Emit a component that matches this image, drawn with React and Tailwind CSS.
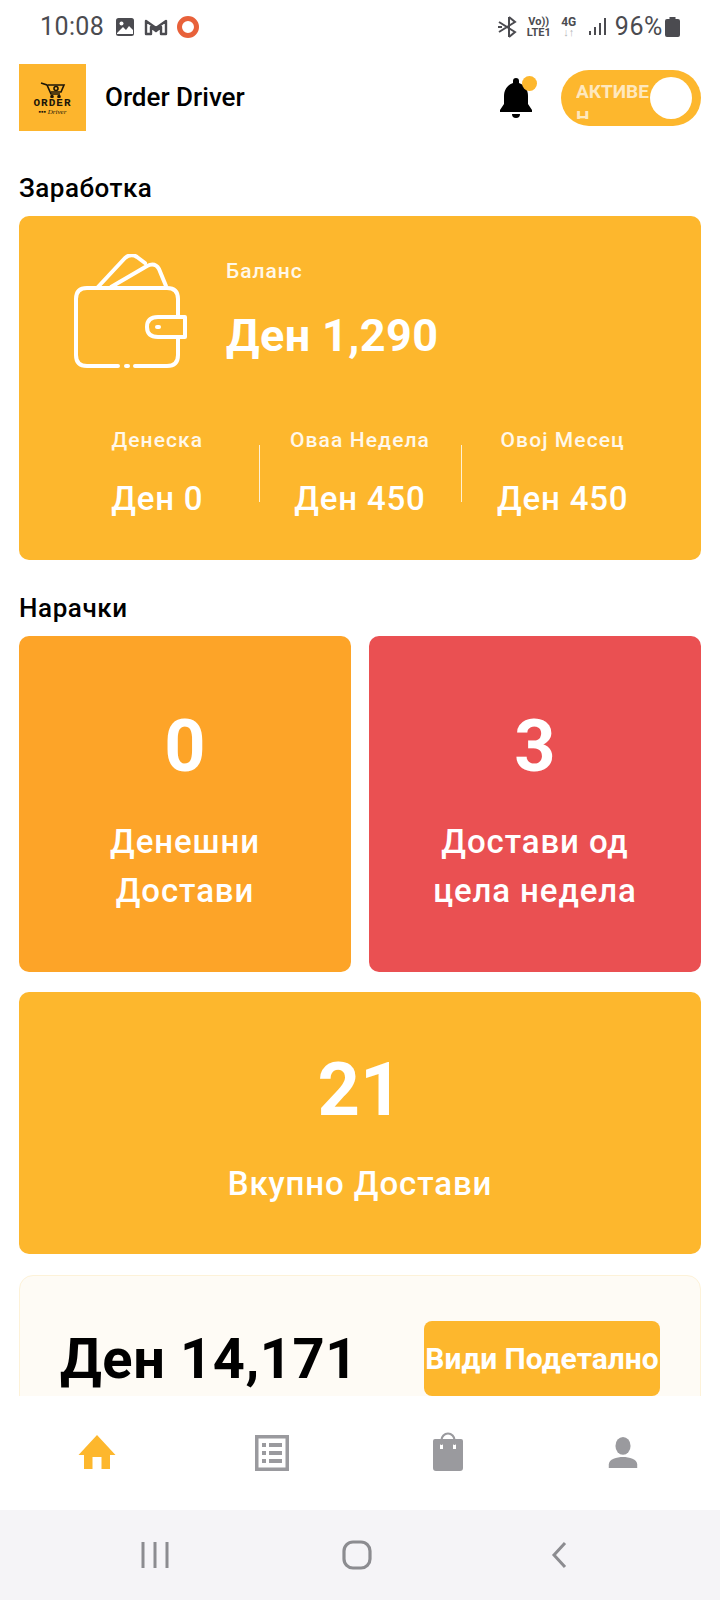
import React from "react";

const font = { fontFamily: "Roboto, 'Liberation Sans', sans-serif" };

function Home() {
  return (
    <svg width="40" height="36" viewBox="0 0 40 36" fill="#fdb72d">
      <path d="M20 1 L38.500 21 H33 V35 H24.500 V23 H15.500 V35 H7 V21 H1.500 Z" />
    </svg>
  );
}
function ListIcon() {
  return (
    <svg width="36" height="36" viewBox="0 0 36 36" fill="#9a9a9e">
      <path fillRule="evenodd" d="M1 0 H35 V36 H1 Z M4.500 3.500 V32.500 H31.500 V3.500 Z" />
      <rect x="8" y="8" width="4" height="4" />
      <rect x="15" y="8" width="13" height="4" />
      <rect x="8" y="16" width="4" height="4" />
      <rect x="15" y="16" width="13" height="4" />
      <rect x="8" y="24" width="4" height="4" />
      <rect x="15" y="24" width="13" height="4" />
    </svg>
  );
}
function Bag() {
  return (
    <svg width="32" height="40" viewBox="0 0 32 40" fill="none">
      <path d="M9.500 13 V8 a6.500 6.500 0 0 1 13 0 V13" stroke="#9a9a9e" strokeWidth="2.200" />
      <path fillRule="evenodd" fill="#9a9a9e" d="M3 7 H29 a2 2 0 0 1 2 2 V36 a3 3 0 0 1 -3 3 H4 a3 3 0 0 1 -3 -3 V9 a2 2 0 0 1 2 -2 Z M8 12 V17 H11 V12 Z M21 12 V17 H24 V12 Z" />
    </svg>
  );
}
function User() {
  return (
    <svg width="32" height="32" viewBox="0 0 34 36" fill="#9a9a9e">
      <ellipse cx="17" cy="10" rx="8.500" ry="10" />
      <path d="M1 35 V31 C1 25 10 22.500 17 22.500 C24 22.500 33 25 33 31 V35 Z" />
    </svg>
  );
}
function Wallet() {
  return (
    <svg width="114" height="116" viewBox="0 0 114 116" fill="none" stroke="#fff" strokeWidth="4" strokeLinecap="round" strokeLinejoin="round">
      <path d="M24 34 L52 4 Q58 -1 64 3 L72 9" />
      <path d="M38 33 L74 12 Q82 8 86 15 L93 32" />
      <path d="M45 112 H14 Q3 112 3 101 V45 Q3 34 14 34 H94 Q105 34 105 45 V63" />
      <path d="M105 83 V101 Q105 112 94 112 H62" />
      <path d="M53 112 H55" />
      <path d="M112 63 H85 Q74 63 74 73 Q74 83 85 83 H112 Z" />
      <path d="M84 73 H86" />
    </svg>
  );
}
function Logo() {
  return (
    <div className="w-[67px] h-[67px] bg-[#fdb52d] flex flex-col items-center justify-center shrink-0 pt-[2px]">
      <svg width="26" height="16" viewBox="0 0 26 16" fill="none" stroke="#1c1608" strokeWidth="1.600">
        <path d="M1 1 L7 3 L11 12 H20" />
        <path d="M8 3 H24 L21 10 H11" />
        <circle cx="16" cy="6.500" r="2" />
        <circle cx="12" cy="14.500" r="1" fill="#1c1608" />
        <circle cx="19" cy="14.500" r="1" fill="#1c1608" />
      </svg>
      <span className="text-[11px] leading-[11px] font-bold tracking-[1px] text-[#1c1608]" style={{ fontFamily: "'Liberation Mono', monospace" }}>ORDER</span>
      <span className="text-[7px] leading-[7px] italic text-[#1c1608]" style={{ fontFamily: "'Liberation Serif', serif" }}>▪▪▪ Driver</span>
    </div>
  );
}

export default function App() {
  return (
    <div className="relative w-[720px] h-[1600px] bg-white flex flex-col overflow-hidden" style={font}>
      <div className="h-[52px] shrink-0 flex items-center justify-between pl-[40px] pr-[40px] pt-[1px] text-[#4b4b50]">
        <div className="flex items-center gap-[9px]">
          <span className="text-[25px] leading-[28px] tracking-[0.4px]">10:08</span>
          <svg width="20" height="20" viewBox="0 0 20 20" className="ml-[2px]">
            <rect x="1" y="1" width="18" height="18" rx="2.500" fill="#4b4b50" />
            <circle cx="6.500" cy="6.500" r="2" fill="#fff" />
            <path d="M2 16 L8 10 L11 13 L14 9 L18 13 V17 H2 Z" fill="#fff" />
          </svg>
          <svg width="24" height="18" viewBox="0 0 24 18" fill="none" stroke="#4b4b50" strokeWidth="2.400" strokeLinejoin="round">
            <path d="M2 16 V3 L12 10 L22 3 V16 H17 V9 L12 13 L7 9 V16 Z" />
          </svg>
          <svg width="24" height="24" viewBox="0 0 24 24" fill="none" className="-ml-[1px]">
            <circle cx="12" cy="12" r="8.500" stroke="#e8613a" strokeWidth="5" />
          </svg>
        </div>
        <div className="flex items-center">
          <svg width="22" height="24" viewBox="0 0 22 24" fill="none" stroke="#4b4b50" strokeWidth="2">
            <path d="M12 2 L18 7 L2 17 M12 22 L18 17 L2 7 M12 2 V22" />
            <path d="M1 12 H5" />
          </svg>
          <div className="ml-[7px] flex flex-col items-center text-[11px] leading-[11px] font-bold w-[26px]">
            <span>Vo))</span>
            <span className="whitespace-nowrap">LTE1</span>
          </div>
          <div className="ml-[8px] flex flex-col items-center w-[18px]">
            <span className="text-[12px] leading-[12px] font-bold">4G</span>
            <span className="text-[11px] leading-[10px] font-bold text-[#b5b5b8] whitespace-nowrap">↓↑</span>
          </div>
          <svg width="20" height="20" viewBox="0 0 20 20" fill="#4b4b50" className="ml-[10px]">
            <rect x="1" y="14" width="2" height="4" />
            <rect x="6" y="10" width="2" height="8" />
            <rect x="11" y="6" width="2" height="12" />
            <rect x="16" y="1" width="2" height="17" />
          </svg>
          <span className="ml-[7px] text-[25px] leading-[28px] tracking-[0.6px]">96%</span>
          <svg width="15" height="20" viewBox="0 0 15 20" fill="#4b4b50" className="ml-[2px]">
            <path d="M4.500 0 H10.500 V2 H13 a2 2 0 0 1 2 2 V18 a2 2 0 0 1 -2 2 H2 a2 2 0 0 1 -2 -2 V4 a2 2 0 0 1 2 -2 H4.500 Z" />
          </svg>
        </div>
      </div>

      <main className="flex-1 min-h-0 overflow-hidden px-[19px]">
        <header className="flex items-center h-[67px] mt-[12px]">
          <Logo />
          <span className="ml-[19px] text-[26px] font-medium text-black">Order Driver</span>
          <div className="relative ml-auto mr-[27px] w-[36px] h-[44px]">
            <svg width="34" height="40" viewBox="0 0 34 40" className="absolute left-[1px] top-[2px]" fill="#000">
              <path d="M17 0 a3 3 0 0 1 3 3 V5 C26 7 29 12 29 18 V26 L33 32 V34 H1 V32 L5 26 V18 C5 12 8 7 14 5 V3 a3 3 0 0 1 3 -3 Z" />
              <path d="M13 36 H21 a4 4 0 0 1 -8 0 Z" />
            </svg>
            <span className="absolute left-[24px] top-0 w-[15px] h-[15px] rounded-full bg-[#fdb72d]" />
          </div>
          <div className="relative w-[140px] h-[56px] rounded-full bg-[#fdb72d] overflow-hidden">
            <div className="w-[85px] h-[49px] ml-[15px] pt-[9px] text-[19px] leading-[26px] font-bold text-white/70 break-all overflow-hidden">АКТИВЕН</div>
            <span className="absolute left-[89px] top-[7px] w-[42px] h-[42px] rounded-full bg-white" />
          </div>
        </header>

        <h2 className="mt-[41px] text-[26px] leading-[32px] font-medium text-black tracking-[0.5px]">Заработка</h2>
        <section className="mt-[12px] h-[344px] rounded-[10px] bg-[#fdb72d] px-[37px] flex flex-col">
          <div className="flex mt-[38px] ml-[17px]">
            <Wallet />
            <div className="ml-[39px] flex flex-col">
              <span className="mt-[5px] text-[21px] leading-[24px] font-medium text-white/90 tracking-[1px]">Баланс</span>
              <span className="mt-[27px] text-[45px] leading-[52px] font-bold text-white tracking-[0.4px]">Ден 1,290</span>
            </div>
          </div>
          <div className="flex mt-[58px]">
            {[["Денеска", "Ден 0"], ["Оваа Недела", "Ден 450"], ["Овој Месец", "Ден 450"]].map(([a, b], i) => (
              <div key={a} className="relative flex-1 flex flex-col items-center">
                {i > 0 && <span className="absolute left-0 top-[17px] h-[57px] w-[1px] bg-white/80" />}
                <span className="text-[21px] leading-[24px] font-medium text-white/90 tracking-[1.1px] whitespace-nowrap">{a}</span>
                <span className="mt-[28px] text-[33px] leading-[38px] font-medium text-white whitespace-nowrap tracking-[0.8px]">{b}</span>
              </div>
            ))}
          </div>
        </section>

        <h2 className="mt-[32px] text-[26px] leading-[32px] font-medium text-black tracking-[0.6px]">Нарачки</h2>
        <div className="mt-[12px] grid grid-cols-2 gap-[18px]">
          <div className="h-[336px] rounded-[10px] bg-[#fda428] flex flex-col items-center text-white">
            <span className="mt-[69px] text-[72px] leading-[84px] font-bold">0</span>
            <span className="mt-[28px] text-[33px] leading-[49px] font-medium text-center tracking-[0.9px]">Денешни<br />Достави</span>
          </div>
          <div className="h-[336px] rounded-[10px] bg-[#ea5052] flex flex-col items-center text-white">
            <span className="mt-[69px] text-[72px] leading-[84px] font-bold">3</span>
            <span className="mt-[28px] text-[33px] leading-[49px] font-medium text-center tracking-[0.9px]">Достави од<br />цела недела</span>
          </div>
        </div>
        <div className="mt-[20px] h-[262px] rounded-[10px] bg-[#fdb72d] flex flex-col items-center text-white">
          <span className="mt-[56px] text-[74px] leading-[84px] font-bold">21</span>
          <span className="mt-[27px] text-[33px] leading-[49px] font-medium tracking-[0.9px]">Вкупно Достави</span>
        </div>
        <div className="mt-[21px] h-[200px] rounded-[14px] bg-[#fefbf5] border border-[#fdf2d8] flex items-start justify-between pl-[40px] pr-[40px] pt-[45px]">
          <span className="text-[56px] leading-[76px] font-bold text-black tracking-[0.6px]">Ден 14,171</span>
          <div className="w-[236px] h-[75px] rounded-[8px] bg-[#fdb72d] flex items-center justify-center text-[30px] font-bold text-white whitespace-nowrap">Види Подетално</div>
        </div>
      </main>

      <nav className="h-[114px] shrink-0 bg-white grid grid-cols-4 px-[9px] pt-[39px]">
        <div className="flex justify-center -mt-[1px]"><Home /></div>
        <div className="flex justify-center"><ListIcon /></div>
        <div className="flex justify-center -mt-[3px]"><Bag /></div>
        <div className="flex justify-center mt-[2px]"><User /></div>
      </nav>

      <div className="h-[90px] shrink-0 bg-[#f5f4f7] grid grid-cols-3 items-center justify-items-center pl-[54px] pr-[60px]">
        <svg width="30" height="28" viewBox="0 0 30 28" stroke="#8c8c90" strokeWidth="3">
          <path d="M3 1 V27 M15 1 V27 M27 1 V27" />
        </svg>
        <svg width="30" height="30" viewBox="0 0 30 30" fill="none" stroke="#8c8c90" strokeWidth="3.200">
          <rect x="2" y="2" width="26" height="26" rx="9" />
        </svg>
        <svg width="20" height="28" viewBox="0 0 20 28" fill="none" stroke="#8c8c90" strokeWidth="3">
          <path d="M16 2 L5 14 L16 26" />
        </svg>
      </div>
    </div>
  );
}
